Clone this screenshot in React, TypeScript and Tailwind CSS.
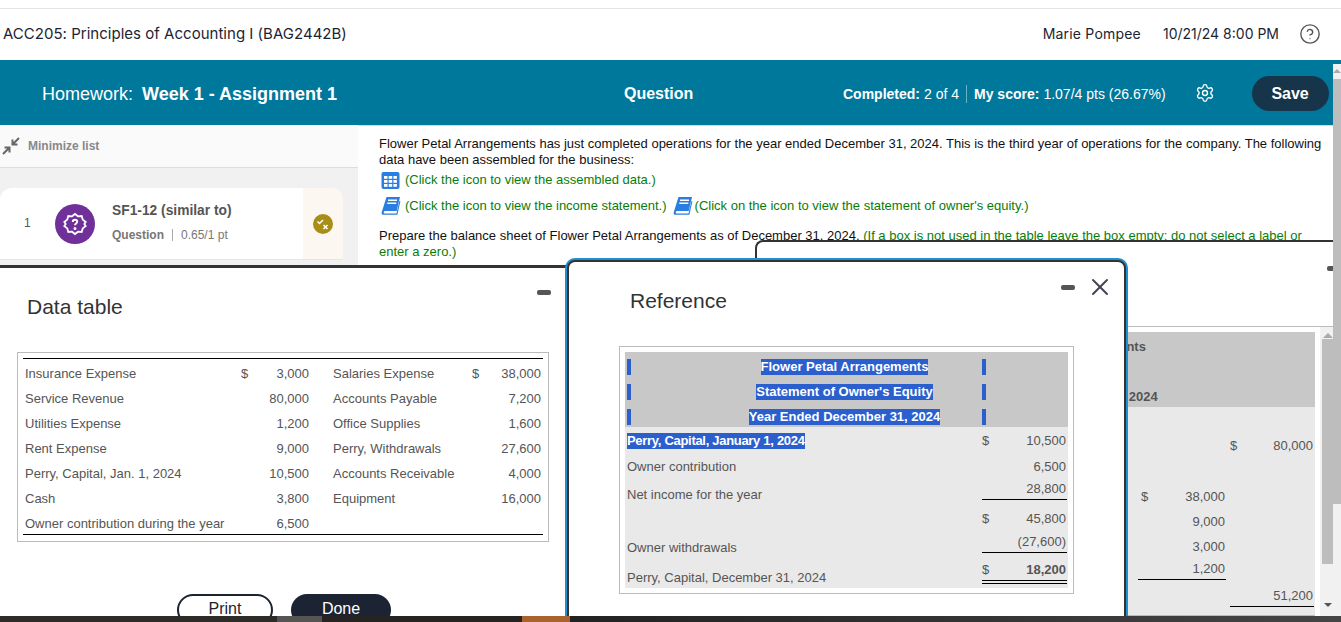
import { CircleHelp, Settings, X } from "lucide-react";

const dataRows = [
  ["Insurance Expense", "$", "3,000", "Salaries Expense", "$", "38,000"],
  ["Service Revenue", "", "80,000", "Accounts Payable", "", "7,200"],
  ["Utilities Expense", "", "1,200", "Office Supplies", "", "1,600"],
  ["Rent Expense", "", "9,000", "Perry, Withdrawals", "", "27,600"],
  ["Perry, Capital, Jan. 1, 2024", "", "10,500", "Accounts Receivable", "", "4,000"],
  ["Cash", "", "3,800", "Equipment", "", "16,000"],
  ["Owner contribution during the year", "", "6,500", "", "", ""],
];

function TableIcon() {
  return (
    <svg width="19" height="19" viewBox="0 0 19 19" className="shrink-0">
      <rect x="0.5" y="1" width="18" height="17" rx="2" fill="#2a7de1" />
      <g fill="#fff">
        <rect x="3" y="5" width="3.5" height="2.8" />
        <rect x="7.7" y="5" width="3.5" height="2.8" />
        <rect x="12.4" y="5" width="3.5" height="2.8" />
        <rect x="3" y="9" width="3.5" height="2.8" />
        <rect x="7.7" y="9" width="3.5" height="2.8" />
        <rect x="12.4" y="9" width="3.5" height="2.8" />
        <rect x="3" y="13" width="3.5" height="2.8" />
        <rect x="7.7" y="13" width="3.5" height="2.8" />
        <rect x="12.4" y="13" width="3.5" height="2.8" />
      </g>
    </svg>
  );
}

function BookIcon() {
  return (
    <svg width="20" height="20" viewBox="0 0 20 20" className="shrink-0">
      <path d="M5.500 1H19l-3.300 14H4.500c-1.200 0-1.800.7-1.800 1.400 0 .6.400 1 1.200 1h11.600l3-12.600.9.500-3 13.400H3C1.200 19 .3 18 .7 16.200z" fill="#2a7de1" />
      <path d="M7 4.300h9M6.300 7.300h9" stroke="#fff" strokeWidth="1.400" />
    </svg>
  );
}

function MinimizeIcon() {
  return (
    <svg width="18" height="18" viewBox="0 0 18 18" fill="none" stroke="#666" strokeWidth="2" className="shrink-0">
      <path d="M1 17l6.500-6.500M2.500 10.500h5v5" />
      <path d="M10.500 7.500L17 1M10.500 2.500v5h5" />
    </svg>
  );
}

function QuestionBadge() {
  return (
    <div className="w-10 h-10 rounded-full bg-[#70309a] flex items-center justify-center shrink-0">
      <svg width="24" height="24" viewBox="0 0 24 24" fill="none" stroke="#fff" strokeWidth="1.800">
        <path d="M12 2l3 2.300 3.700-.300 1 3.600 3 2.400-1.400 2 1.400 2-3 2.400-1 3.600-3.700-.300-3 2.300-3-2.300-3.700.300-1-3.600-3-2.400 1.400-2-1.400-2 3-2.400 1-3.600 3.700.300z" />
        <path d="M9.800 10c0-1.300 1-2.200 2.200-2.200s2.200.9 2.200 2c0 1.700-2.200 1.700-2.200 3.400" strokeWidth="2" />
        <circle cx="12" cy="16.500" r="0.600" />
      </svg>
    </div>
  );
}

function StatusBadge() {
  return (
    <div className="w-5 h-5 rounded-full bg-[#a88e17] flex items-center justify-center">
      <svg width="14" height="14" viewBox="0 0 14 14" fill="none" stroke="#fff" strokeWidth="1.500">
        <path d="M1.500 4.500l2 2 3.500-3.500" />
        <path d="M7.500 8l4 4M11.500 8l-4 4" />
      </svg>
    </div>
  );
}

function Dash() {
  return <div className="w-[14px] h-[5px] rounded-[2px] bg-[#555]" />;
}

function Sel({ children, className }: { children: React.ReactNode; className?: string }) {
  return <span className={`bg-[#2b5fce] text-white font-bold inline-block h-4 leading-4 ${className ?? ""}`}>{children}</span>;
}

function HeadRow({ text }: { text: string }) {
  return (
    <div className="flex h-[25px] items-center pl-[2px]">
      <div className="w-1 h-4 bg-[#2b5fce]" />
      <div className="w-[351px] text-center pl-[76px]">
        <Sel>{text}</Sel>
      </div>
      <div className="w-1 h-4 bg-[#2b5fce]" />
    </div>
  );
}

function Money({ sign, value, className }: { sign?: string; value: string; className?: string }) {
  return (
    <div className={`flex justify-between pr-[1px] ${className ?? ""}`}>
      <span>{sign}</span>
      <span>{value}</span>
    </div>
  );
}

export default function App() {
  return (
    <div className="relative w-[1341px] h-[622px] overflow-hidden bg-white flex flex-col font-['Liberation_Sans',Arial,sans-serif] text-[#333]">
      <div className="h-[9px] shrink-0 border-b border-[#e4e4e4]" />
      <header className="h-[51px] shrink-0 flex items-center pl-[3px] pr-[20px] pb-[2px] text-sm text-[#1c2433] font-['Inter',sans-serif]">
        <div className="flex-1 text-[15px] tracking-[0.02px]">ACC205: Principles of Accounting I (BAG2442B)</div>
        <div className="mr-[22px] tracking-[0.2px]">Marie Pompee</div>
        <div className="mr-[20px]">10/21/24 8:00 PM</div>
        <CircleHelp size={22} strokeWidth={1.500} className="text-[#555]" />
      </header>
      <div className="h-[65px] shrink-0 bg-[#00789b] flex items-center text-white pr-3 pt-[1px]">
        <div className="w-[624px] pl-[42px] text-[18px] flex gap-[9px] pt-[3px]">
          <span>Homework:</span>
          <span className="font-bold">Week 1 - Assignment 1</span>
        </div>
        <div className="w-[219px] text-base font-bold pt-[2px]">Question</div>
        <div className="flex items-center text-sm pt-[2px]">
          <span className="font-bold mr-1">Completed:</span>
          <span>2 of 4</span>
          <span className="w-px h-[18px] bg-[#6fb0c4] mx-[7px]" />
          <span className="font-bold mr-1">My score:</span>
          <span>1.07/4 pts (26.67%)</span>
        </div>
        <Settings size={20} strokeWidth={1.600} className="ml-[29px] mr-[37px]" />
        <button className="w-[77px] h-[35px] pt-[1px] rounded-full bg-[#17354a] text-base font-bold text-white">Save</button>
      </div>
      <div className="flex flex-1 min-h-0">
        <aside className="w-[358px] shrink-0 bg-[#f1f1f1] flex flex-col">
          <div className="h-[43px] bg-[#fafafa] border-b border-[#dedede] flex items-center gap-[8px] pl-[2px] text-xs font-bold text-[#888]">
            <MinimizeIcon />
            <span>Minimize list</span>
          </div>
          <div className="mt-5 w-[343px] h-[72px] bg-white rounded-t-xl border-b border-[#e6e6e6] flex items-center overflow-hidden">
            <div className="w-[55px] pl-[24px] pb-[2px] text-xs text-[#555]">1</div>
            <QuestionBadge />
            <div className="flex-1 pl-[17px] pb-[2px]">
              <div className="text-[13.800px] font-bold text-[#555] leading-4">SF1-12 (similar to)</div>
              <div className="text-xs text-[#777] mt-2 flex items-center">
                <span className="font-bold">Question</span>
                <span className="w-px h-3 bg-[#aaa] mx-2" />
                <span>0.65/1 pt</span>
              </div>
            </div>
            <div className="w-10 h-full bg-[#fcf7f1] flex items-center justify-center">
              <StatusBadge />
            </div>
          </div>
        </aside>
        <main className="flex-1 border-t border-[#d3d9e6] pl-[21px] pr-2 text-[13px] leading-4 text-[#111]">
          <p className="mt-[10px]">
            Flower Petal Arrangements has just completed operations for the year ended December 31, 2024. This is the third year of operations for the company. The following data have been assembled for the business:
          </p>
          <div className="flex items-center gap-[5px] pl-[2px] mt-[1px] h-[22px] text-[#087d08]">
            <TableIcon />
            <span>(Click the icon to view the assembled data.)</span>
          </div>
          <div className="flex items-center gap-[4px] pl-[2px] mt-1 h-[22px] text-[#087d08]">
            <BookIcon />
            <span>(Click the icon to view the income statement.)</span>
            <span className="ml-[2px] flex items-center gap-[2px]">
              <BookIcon />
              <span>(Click on the icon to view the statement of owner's equity.)</span>
            </span>
          </div>
          <p className="mt-[11px]">
            Prepare the balance sheet of Flower Petal Arrangements as of December 31, 2024.{" "}
            <span className="text-[#087d08]">(If a box is not used in the table leave the box empty; do not select a label or enter a zero.)</span>
          </p>
        </main>
        <div className="w-2 shrink-0 bg-[#f1f1f1] -mt-[61px] z-0 flex flex-col">
          <div className="h-[15px] flex justify-center pt-[5px]">
            <div className="w-0 h-0 border-x-[4px] border-x-transparent border-b-[4px] border-b-[#aaa]" />
          </div>
          <div className="h-[425px] bg-[#bdbdbd]" />
        </div>
      </div>

      {/* Window behind, partly covered by the two others */}
      <section className="absolute z-10 left-[755px] top-[240px] w-[578px] h-[376px] bg-white border-t-2 border-l-2 border-[#333] rounded-tl-lg flex flex-col">
        <div className="h-[85px] border-b border-[#bbb] flex justify-end pt-[24px]">
          <div className="w-[6px] h-[5px] bg-[#555] rounded-l-[2px]" />
        </div>
        <div className="flex flex-1 text-[#555] text-[13px]">
          <div className="w-[558px] pt-[5px] flex flex-col">
            <div className="bg-[#c8c8c8] h-[75px] w-full font-bold pl-[144px] pt-[2px] leading-[25px]">
              <div className="w-[322px] text-center">
                <div>Flower Petal Arrangements</div>
                <div>Income Statement</div>
                <div>Year Ended December 31, 2024</div>
              </div>
            </div>
            <div className="bg-[#e9e9e9] flex-1 flex flex-col items-end pr-[1px] pt-[31px] border-b border-[#bbb] leading-[15px]">
              <Money sign="$" value="80,000" className="w-[84px]" />
              <div className="h-[36px]" />
              <div className="mr-[88px] flex flex-col">
                <Money sign="$" value="38,000" className="w-[88px] pl-[3px]" />
                <div className="h-[10px]" />
                <Money value="9,000" className="w-[88px]" />
                <div className="h-[10px]" />
                <Money value="3,000" className="w-[88px]" />
                <div className="h-[7px]" />
                <Money value="1,200" className="w-[88px] border-b border-black h-[19px]" />
              </div>
              <div className="h-[8px]" />
              <Money value="51,200" className="w-[84px] border-b border-black h-[19px]" />
            </div>
          </div>
          <div className="flex-1 ml-[5px] bg-[#f1f1f1] flex flex-col items-center pt-[6px] pl-[2px]">
            <div className="w-0 h-0 border-x-[5px] border-x-transparent border-b-[5px] border-b-[#aaa]" />
            <div className="w-full h-[225px] bg-[#bdbdbd] mt-[1px]" />
            <div className="flex-1" />
            <div className="w-0 h-0 mb-[9px] border-x-[4px] border-x-transparent border-t-[4px] border-t-[#555]" />
          </div>
        </div>
      </section>

      {/* Data table window */}
      <section className="absolute z-20 left-0 top-[265px] w-[567px] h-[351px] bg-white border-t-[3px] border-[#333] overflow-hidden text-[13px] text-[#555]">
        <div className="h-[84px] flex justify-between pl-[27px] pr-[16px]">
          <h2 className="mt-[26px] text-[21px] leading-[26px] text-[#333]">Data table</h2>
          <div className="mt-[22px]"><Dash /></div>
        </div>
        <div className="ml-[17px] w-[532px] h-[190px] border border-[#bbb] px-[5px] pt-[5px]">
          <div className="w-[520px] border-y border-black h-[177px] pt-[2px]">
            {dataRows.map((r, i) => (
              <div key={r[0]} className={`flex leading-[25px] ${i === 6 ? "h-[23px]" : "h-[25px]"}`}>
                <div className="w-[218px] pl-[2px]">{r[0]}</div>
                <div className="w-[70px] pr-[2px] flex justify-between"><span>{r[1]}</span><span>{r[2]}</span></div>
                <div className="w-[161px] pl-[22px]">{r[3]}</div>
                <div className="w-[71px] pr-[2px] flex justify-between"><span>{r[4]}</span><span>{r[5]}</span></div>
              </div>
            ))}
          </div>
        </div>
        <div className="mt-[52px] ml-[177px] flex gap-[18px] text-base leading-5">
          <button className="w-[96px] h-[32px] pb-[2px] rounded-full border-2 border-[#1c2433] text-[#1c2433] bg-white">Print</button>
          <button className="w-[100px] h-[32px] pb-[2px] rounded-full bg-[#1c2433] text-white">Done</button>
        </div>
      </section>

      {/* Reference window */}
      <section className="absolute z-30 left-[567px] top-[260px] w-[559px] h-[362px] bg-white border-2 border-[#333] rounded-t-lg shadow-[0_0_0_2px_#1e90d0] text-[13px] text-[#555]">
        <div className="h-[84px] flex justify-between pl-[61px] pr-[10px]">
          <h2 className="mt-[26px] text-[21px] leading-[26px] text-[#333]">Reference</h2>
          <div className="flex gap-[11px] items-start mt-[11px]">
            <div className="mt-[12px]"><Dash /></div>
            <X size={28} strokeWidth={1.700} className="text-[#445]" />
          </div>
        </div>
        <div className="ml-[50px] w-[455px] h-[248px] border border-[#bbb] p-[5px]">
          <div className="bg-[#c8c8c8] h-[75px] pt-[2px]">
            <HeadRow text="Flower Petal Arrangements" />
            <HeadRow text="Statement of Owner's Equity" />
            <HeadRow text="Year Ended December 31, 2024" />
          </div>
          <div className="bg-[#e9e9e9] h-[161px] flex flex-col leading-[15px]">
            <div className="h-[27px] flex items-center pl-[2px]">
              <div className="w-[355px]"><Sel className="tracking-[-0.3px]">Perry, Capital, January 1, 2024</Sel></div>
              <Money sign="$" value="10,500" className="w-[85px]" />
            </div>
            <div className="h-[25px] flex items-center pl-[2px]">
              <div className="w-[355px]">Owner contribution</div>
              <Money value="6,500" className="w-[85px]" />
            </div>
            <div className="h-[23px] flex pl-[2px]">
              <div className="w-[355px] self-end">Net income for the year</div>
              <Money value="28,800" className="w-[85px] h-[21px] border-b border-black pt-[2px]" />
            </div>
            <div className="h-[28px] flex pl-[2px] pt-[9px]">
              <div className="w-[355px]" />
              <Money sign="$" value="45,800" className="w-[85px]" />
            </div>
            <div className="h-[25px] flex pl-[2px]">
              <div className="w-[355px] self-end">Owner withdrawals</div>
              <Money value="(27,600)" className="w-[85px] h-[23px] border-b border-black pt-[4px]" />
            </div>
            <div className="h-[33px] flex pl-[2px]">
              <div className="w-[355px] pt-[15px]">Perry, Capital, December 31, 2024</div>
              <Money sign="$" value="18,200" className="w-[85px] h-[29px] border-b-[4px] border-double border-black pt-[7px] font-bold [&>span:first-child]:font-normal" />
            </div>
          </div>
        </div>
      </section>

      {/* Sliver of the desktop task bar */}
      <footer className="absolute z-40 left-0 right-0 bottom-0 h-[6px] flex bg-[#2d2b28]">
        <div className="w-[277px] bg-[#2e2c29]" />
        <div className="w-[45px] bg-[#565553]" />
        <div className="w-[200px] bg-[#252422]" />
        <div className="w-[48px] bg-[#a9632c]" />
        <div className="flex-1 bg-gradient-to-r from-[#222] to-[#454545]" />
      </footer>
    </div>
  );
}
